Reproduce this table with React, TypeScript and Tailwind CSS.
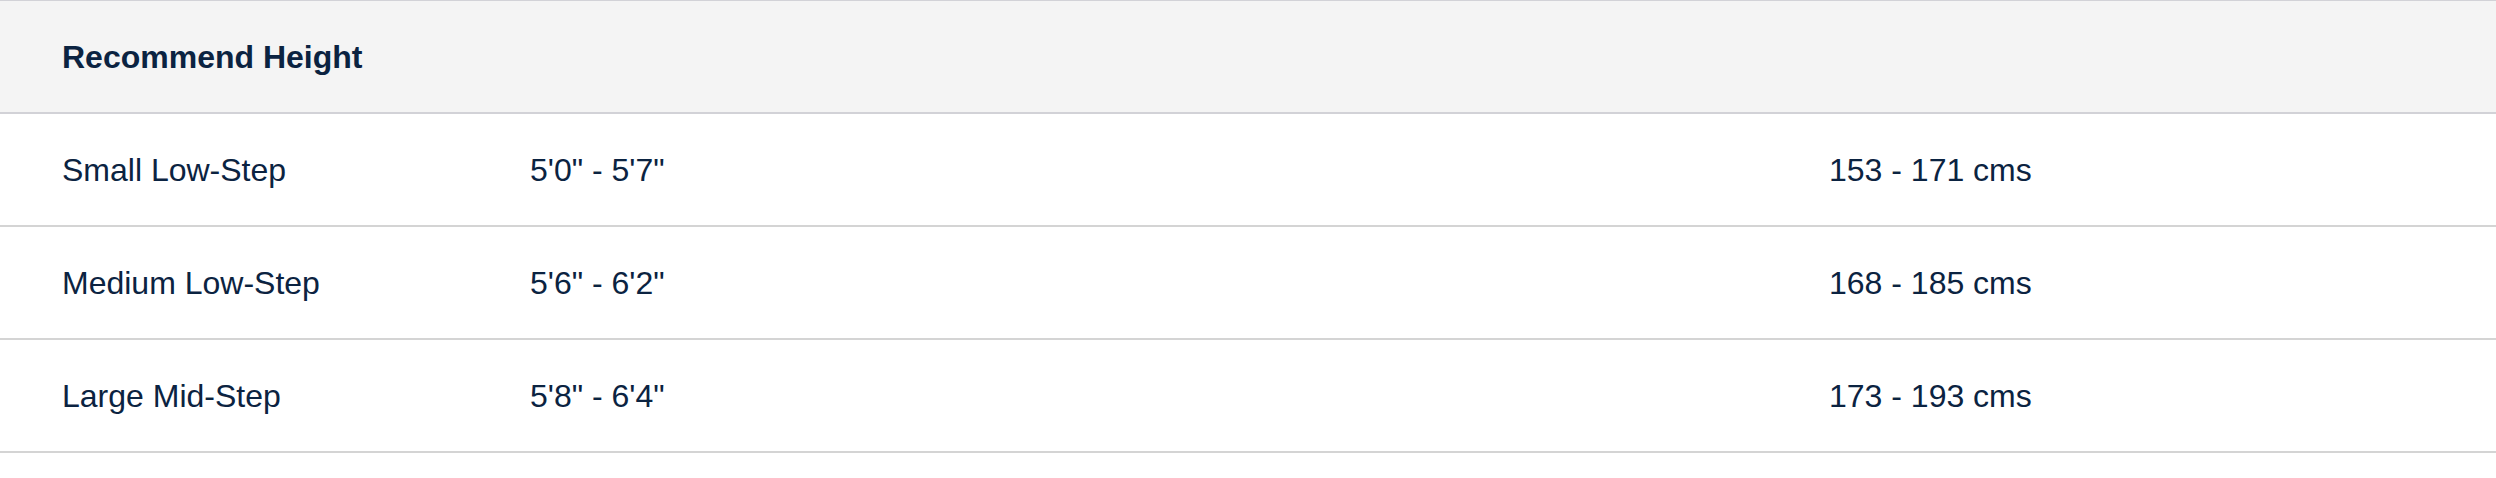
const rows = [
  { name: 'Small Low-Step', ft: `5'0" - 5'7"`, cm: '153 - 171 cms' },
  { name: 'Medium Low-Step', ft: `5'6" - 6'2"`, cm: '168 - 185 cms' },
  { name: 'Large Mid-Step', ft: `5'8" - 6'4"`, cm: '173 - 193 cms' },
];

export default function App() {
  return (
    <div className="w-full min-h-[478px] bg-white text-[#0b2341] font-['Liberation_Sans',Arial,sans-serif]">
      <div className="border-t border-[#d2d2d7]">
        {/* header */}
        <div className="h-[113px] flex items-center bg-[#f4f4f4] border-b-2 border-[#d2d2d7] pl-[62px]">
          <span className="text-[32px] font-bold leading-none">Recommend Height</span>
        </div>

        {rows.map((r) => (
          <div
            key={r.name}
            className="h-[113px] grid grid-cols-[530px_1299px_1fr] items-center border-b-2 border-[#d4d4d4] text-[32px] leading-none"
          >
            <span className="pl-[62px]">{r.name}</span>
            <span>{r.ft}</span>
            <span>{r.cm}</span>
          </div>
        ))}
      </div>
    </div>
  );
}
